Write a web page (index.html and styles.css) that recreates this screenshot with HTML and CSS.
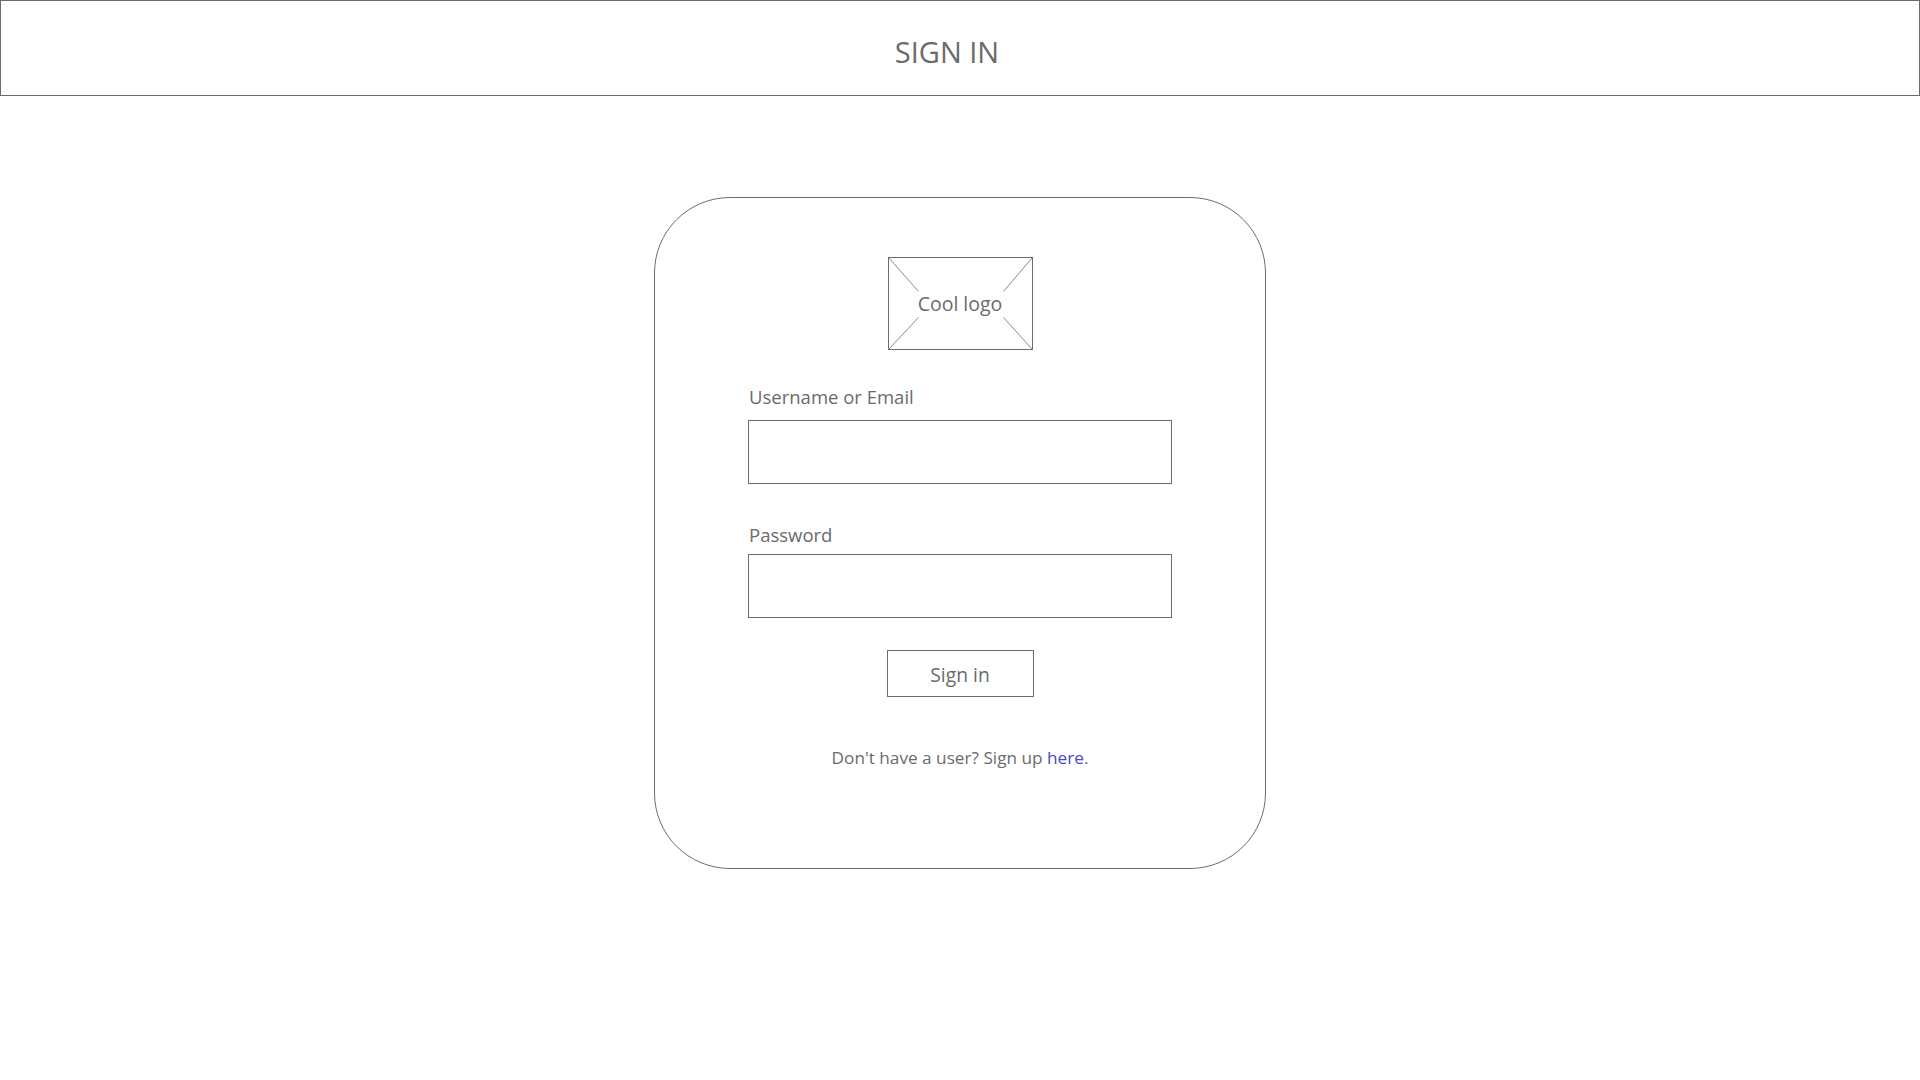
FILE: index.html
```html
<!DOCTYPE html>
<html lang="en">
<head>
<meta charset="utf-8">
<title>Sign in</title>
<link rel="stylesheet" href="styles.css">
</head>
<body>
<header class="topbar">
  <h1 class="topbar-title">SIGN IN</h1>
</header>
<main class="page">
  <section class="card">
    <div class="logo">
      <svg class="logo-lines" width="143" height="91" viewBox="0 0 143 91" aria-hidden="true">
        <line x1="0" y1="0" x2="29.5" y2="33.5"/>
        <line x1="0" y1="91" x2="29.5" y2="59.5"/>
        <line x1="143" y1="0" x2="114.5" y2="33.5"/>
        <line x1="143" y1="91" x2="114.5" y2="59.5"/>
      </svg>
      <span class="logo-text">Cool logo</span>
    </div>
    <form class="form">
      <label class="field-label field-label-first" for="user">Username or Email</label>
      <input class="field-input" id="user" type="text">
      <label class="field-label field-label-second" for="pass">Password</label>
      <input class="field-input" id="pass" type="password">
      <button class="btn" type="button">Sign in</button>
    </form>
    <p class="signup">Don't have a user? Sign up <a class="signup-link" href="#">here</a>.</p>
  </section>
</main>
</body>
</html>
```
FILE: styles.css
```css
* { box-sizing: border-box; }
html, body { margin: 0; padding: 0; background: #fff; }
body {
  font-family: "Open Sans", "Noto Sans", sans-serif;
  color: #6b6b6b;
}
.topbar {
  height: 96px;
  border: 1px solid #6d6d6d;
  display: flex;
  align-items: center;
  justify-content: center;
  padding-top: 8px;
  padding-right: 26px;
}
.topbar-title {
  margin: 0;
  font-weight: 400;
  font-size: 29px;
  line-height: 38px;
  color: #6b6b6b;
}
.page {
  display: flex;
  justify-content: center;
  padding-top: 101px;
}
.card {
  width: 612px;
  height: 672px;
  border: 1px solid #6d6d6d;
  border-radius: 76px;
  display: flex;
  flex-direction: column;
  align-items: center;
  padding-top: 59px;
}
.logo {
  position: relative;
  width: 145px;
  height: 93px;
  border: 1px solid #6d6d6d;
  display: flex;
  align-items: center;
  justify-content: center;
}
.logo-lines {
  position: absolute;
  left: 0;
  top: 0;
}
.logo-lines line {
  stroke: #8a8a8a;
  stroke-width: 1;
}
.logo-text {
  font-size: 19.5px;
  line-height: 26px;
  color: #6b6b6b;
  padding-top: 1px;
}
.form {
  width: 424px;
  display: flex;
  flex-direction: column;
  align-items: stretch;
}
.field-label {
  font-size: 18.5px;
  line-height: 26px;
  color: #6b6b6b;
  padding-left: 1px;
}
.field-label-first { margin-top: 34px; }
.field-label-second { margin-top: 38px; }
.field-input {
  height: 64px;
  border: 1px solid #6d6d6d;
  margin: 0;
  padding: 0 12px;
  background: #fff;
  outline: none;
  font-family: inherit;
  font-size: 18px;
}
.field-label-first + .field-input { margin-top: 10px; }
.field-label-second + .field-input { margin-top: 6px; }
.btn {
  align-self: center;
  margin-top: 32px;
  width: 147px;
  height: 47px;
  border: 1px solid #6d6d6d;
  background: #fff;
  font-family: inherit;
  font-size: 19.3px;
  color: #6b6b6b;
  padding: 1px 0 0;
}
.signup {
  margin: 49px 0 0;
  font-size: 17.2px;
  line-height: 24px;
  color: #6b6b6b;
}
.signup-link {
  color: #4747c8;
  text-decoration: none;
}
```
